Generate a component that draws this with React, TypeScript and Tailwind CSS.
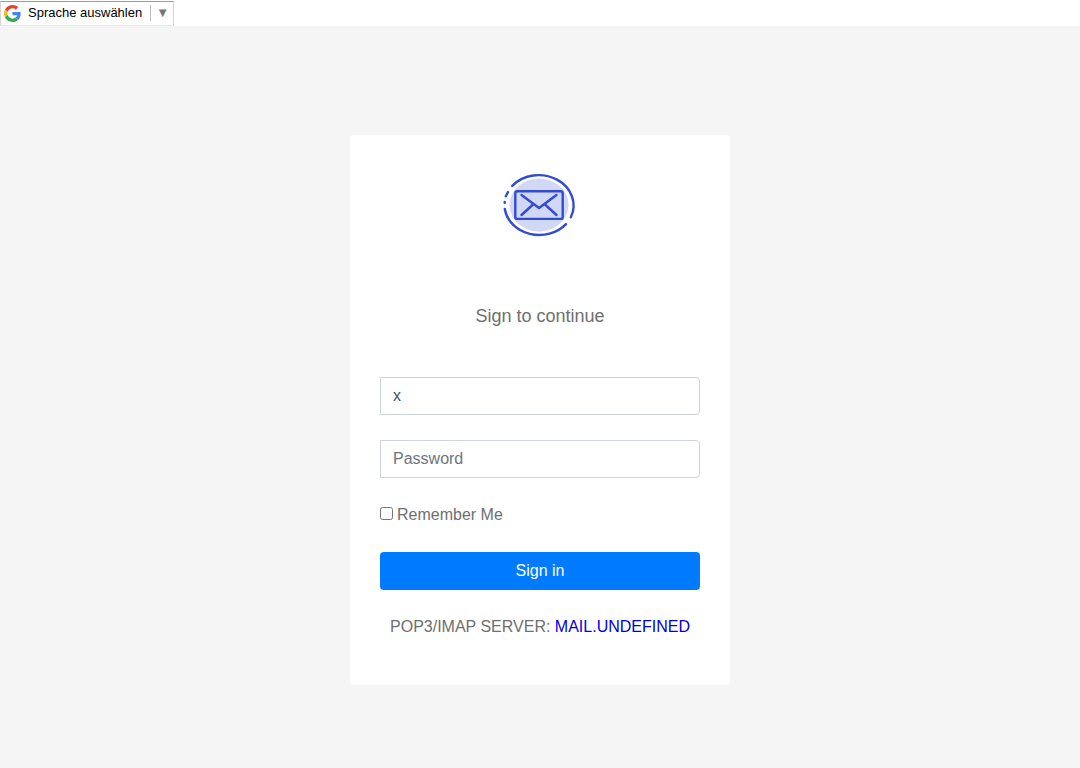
import React, { useState } from 'react'

function GoogleIcon() {
  return (
    <svg className="h-[17px] w-[17px]" viewBox="0 0 48 48" aria-hidden="true">
      <path
        fill="#EA4335"
        d="M24 9.5c3.54 0 6.71 1.22 9.21 3.6l6.85-6.85C35.9 2.38 30.47 0 24 0 14.62 0 6.51 5.38 2.56 13.22l7.98 6.19C12.43 13.72 17.74 9.5 24 9.5z"
      />
      <path
        fill="#4285F4"
        d="M46.98 24.55c0-1.57-.15-3.09-.38-4.55H24v9.02h12.94c-.58 2.96-2.26 5.48-4.78 7.18l7.73 6c4.51-4.18 7.09-10.36 7.09-17.65z"
      />
      <path
        fill="#FBBC05"
        d="M10.53 28.59c-.48-1.45-.76-2.99-.76-4.59s.27-3.14.76-4.59l-7.98-6.19C.92 16.46 0 20.12 0 24c0 3.88.92 7.54 2.56 10.78l7.97-6.19z"
      />
      <path
        fill="#34A853"
        d="M24 48c6.48 0 11.93-2.13 15.89-5.81l-7.73-6c-2.15 1.45-4.92 2.3-8.16 2.3-6.26 0-11.57-4.22-13.47-9.91l-7.98 6.19C6.51 42.62 14.62 48 24 48z"
      />
    </svg>
  )
}

function MailLogo() {
  return (
    <svg
      className="h-20 w-[90px]"
      viewBox="0 0 90 80"
      role="img"
      aria-label="Mail"
    >
      <ellipse cx="44" cy="40" rx="29.5" ry="26.5" fill="#d0d8f6" />
      <g
        fill="none"
        stroke="#324bd6"
        strokeWidth="2.4"
        strokeLinecap="round"
        strokeLinejoin="round"
      >
        {/* Broken ring */}
        <path d="M17.2 20.9A34.8 30.3 0 0 1 75.8 52.3" />
        <path d="M71 59.100A34.800 30.300 0 0 1 9.800 44" />
        <path d="M9.7 37v.8M10.8 31.2 13 27" />
        {/* Envelope */}
        <rect x="20.3" y="26.2" width="47.4" height="27.7" rx="2" />
        <path d="M26.5 30 44 43 61.5 30M26.5 50 38 39.5M61.5 50 50 39.5" />
      </g>
    </svg>
  )
}

export default function App() {
  const [user, setUser] = useState('x')
  const [password, setPassword] = useState('')

  return (
    <div className="flex min-h-screen flex-col bg-[#f5f5f5] font-['Liberation_Sans',Arial,sans-serif] text-base text-[#6f6f6f]">
      {/* Language bar */}
      <header className="flex bg-white pt-px">
        <button
          type="button"
          className="flex h-[25px] items-center border border-[#d5d5d5] border-t-[#9b9b9b] border-b-[#e8e8e8] bg-white pr-1 pb-px pl-[3px] text-[13px] text-black"
        >
          <GoogleIcon />
          <span className="ml-[7px] border-r border-[#bbbbbb] pr-2 leading-4">
            Sprache auswählen
          </span>
          <span className="ml-[5px] text-[#767676]">▼</span>
        </button>
      </header>

      <main className="flex justify-center px-4 pt-[109px] pb-12">
        <form
          className="w-full max-w-[380px] rounded-sm bg-white px-[30px] pt-[30px] pb-[46px]"
          onSubmit={(e) => e.preventDefault()}
        >
          <div className="flex justify-center">
            <MailLogo />
          </div>

          <h1 className="mt-[57px] text-center text-lg">Sign to continue</h1>

          <input
            className="mt-[47px] block h-[38px] w-full rounded-r border border-[#ced4da] bg-white px-3 text-[#495057] outline-none"
            type="text"
            aria-label="Email"
            value={user}
            onChange={(e) => setUser(e.target.value)}
          />
          <input
            className="mt-[25px] block h-[38px] w-full rounded-r border border-[#ced4da] bg-white px-3 text-[#495057] outline-none placeholder:text-[#6c757d]"
            type="password"
            aria-label="Password"
            placeholder="Password"
            value={password}
            onChange={(e) => setPassword(e.target.value)}
          />

          <div className="mt-[25px] flex items-center">
            <input
              type="checkbox"
              id="remember"
              className="mb-[3px] h-[13px] w-[13px]"
            />
            <label htmlFor="remember" className="pl-1">
              Remember Me
            </label>
          </div>

          <button
            type="submit"
            className="mt-[25px] h-[38px] w-full rounded bg-[#007bff] text-white"
          >
            Sign in
          </button>

          <p className="mt-[25px] text-center">
            POP3/IMAP SERVER:{' '}
            <a href="#" className="text-[#0000e0]">
              MAIL.UNDEFINED
            </a>
          </p>
        </form>
      </main>
    </div>
  )
}
